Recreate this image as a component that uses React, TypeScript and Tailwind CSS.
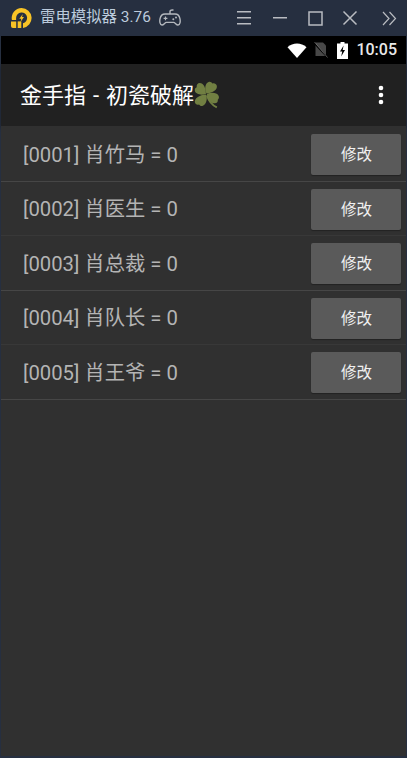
const font = { fontFamily: '"Roboto", "Noto Sans CJK SC", sans-serif' };

const rows = [
  { id: "0001", name: "肖竹马", line: "border-[#464646]" },
  { id: "0002", name: "肖医生", line: "border-[#383838]" },
  { id: "0003", name: "肖总裁", line: "border-[#464646]" },
  { id: "0004", name: "肖队长", line: "border-[#383838]" },
  { id: "0005", name: "肖王爷", line: "border-[#464646]" },
];

function Logo() {
  return (
    <svg width="22" height="21" viewBox="0 0 22 21" className="shrink-0">
      <path
        fillRule="evenodd"
        d="M11.500 0a10 10 0 0 1 1.500 19.900V15.300a5.500 5.500 0 1 0-6.900-5.300v2H1.900A10 10 0 0 1 11.500 0z"
        fill="#f8c326"
      />
      <path d="M1 13.400h5.200V20H3a2 2 0 0 1-2-2z" fill="#f8c326" />
      <rect x="7.700" y="13.400" width="3.600" height="6.600" fill="#f8c326" />
      <path d="M12.800 6 9.300 10.800h2l-.8 3.200 3.500-4.900h-2z" fill="#f8c326" />
    </svg>
  );
}

function Gamepad() {
  return (
    <svg width="22" height="18" viewBox="0 0 22 18" fill="none" stroke="#b4b8bd" strokeWidth="1.400" className="shrink-0">
      <path d="M11 5V2.500C11 1.500 12 1 13 1h1.500" />
      <path d="M6 5h10c2.800 0 4.400 1.800 5 4.800.500 2.800.100 6-2 6.200-1.800.100-2.800-2.600-4.500-2.600h-7C5.800 13.400 4.800 16.100 3 16c-2.100-.2-2.500-3.400-2-6.200C1.600 6.800 3.200 5 6 5z" />
      <path d="M4.600 9.300h3.800M6.500 7.400v3.800" strokeWidth="1.200" />
      <circle cx="14.300" cy="10.200" r="1" fill="#b4b8bd" stroke="none" />
      <circle cx="17" cy="8.400" r="1" fill="#b4b8bd" stroke="none" />
    </svg>
  );
}

function WindowButtons() {
  return (
    <div className="ml-auto flex items-center">
      <svg width="16" height="14" viewBox="0 0 16 14" className="mr-[20px]" fill="#b9bcc1">
        <rect x="1" y="0" width="14" height="1.500" />
        <rect x="1" y="6" width="14" height="1.500" />
        <rect x="1" y="12" width="14" height="1.500" />
      </svg>
      <svg width="16" height="14" viewBox="0 0 16 14" className="mr-[20px]" fill="#b9bcc1">
        <rect x="1" y="6" width="14" height="1.500" />
      </svg>
      <svg width="15" height="15" viewBox="0 0 15 15" className="mr-[19px]" fill="none" stroke="#b9bcc1" strokeWidth="1.500">
        <rect x="1" y="1" width="13" height="13" />
      </svg>
      <svg width="16" height="16" viewBox="0 0 16 16" className="mr-[24px]" fill="none" stroke="#b9bcc1" strokeWidth="1.500">
        <path d="M1.500 1.500 14.500 14.500M14.500 1.500 1.500 14.500" />
      </svg>
      <svg width="15" height="15" viewBox="0 0 15 15" className="mr-[10px]" fill="none" stroke="#b9bcc1" strokeWidth="1.200">
        <path d="M1 1l6 6.500-6 6.500M7.500 1l6 6.500-6 6.500" />
      </svg>
    </div>
  );
}

function StatusIcons() {
  return (
    <>
      <svg width="20" height="15" viewBox="0 0 20 15" className="mr-[6px]">
        <path d="M0.500 4.200C5.800-.8 14.200-.8 19.500 4.200L10 15z" fill="#ffffff" />
      </svg>
      <svg width="15" height="16" viewBox="0 0 15 16" className="mr-[9px]">
        <path d="M2.500 0.500h7.500l3 3v10.500h-10.500z" fill="#484848" />
        <path d="M0.500 0.500 14 15" stroke="#000000" strokeWidth="1.200" />
        <path d="M1.500 0 14.500 15.500" stroke="#8a8a8a" strokeWidth=".6" />
      </svg>
      <svg width="11" height="17" viewBox="0 0 11 17" className="mr-[8px]">
        <path d="M3.500 0h4v1.500h3.500v15.500H0V1.500h3.500z" fill="#ffffff" />
        <path d="M6.600 3.500 3 9.500h2.200L4.200 14.500l3.800-6.500H5.700z" fill="#000000" />
      </svg>
    </>
  );
}

function Clover() {
  return (
    <svg width="27" height="29" viewBox="0 0 26 28" className="shrink-0">
      <g fill="#717f42">
        <path d="M11.500 12.500C7 14 1.500 13 .8 9.500c-.4-2 .6-3 1.800-3.500C2.200 4 3.500 2 5.500 2c3.500 0 6 4.500 6 10.500z" />
        <path d="M12 12C10 8 10.500 2.500 14 1c1.500-.6 3 .2 3.700 1.400C19.200 1.500 21.500 2.500 22 4.500c.8 3.500-3.500 7-10 7.500z" />
        <path d="M12.500 12.500c4-1.700 9.500-1.500 11.200 1.800.8 1.600.2 3-.8 3.800.5 1.600-.8 3.400-2.800 3.400-3.800 0-7.600-3-7.600-9z" />
        <path d="M11.800 13c1.200 4.300.2 9.500-3.300 10.800-1.600.6-3 0-3.700-1.200-1.600.8-3.600 0-4-2-.7-3.500 4-7.300 11-7.600z" />
      </g>
      <path d="M12.500 14c1.500 5 4.500 9 9.500 11.500" fill="none" stroke="#717f42" strokeWidth="1.800" />
    </svg>
  );
}

function Row({ id, name, line }: { id: string; name: string; line: string }) {
  return (
    <div className={`flex h-[54.500px] items-center justify-between border-b ${line} pl-[22px] pr-[5px] pt-[2px]`}>
      <span className="text-[20.300px] text-[#b4b4b4]">
        [{id}] {name} = 0
      </span>
      <button className="flex h-[41px] w-[90px] items-center justify-center rounded-[2px] bg-[#5a5a5a] pl-[1px] pt-[2px] text-[15.500px] text-[#f0f0f0] shadow-[0_1px_1px_rgba(0,0,0,0.3)]">
        修改
      </button>
    </div>
  );
}

export default function App() {
  return (
    <div className="flex h-[758px] w-[407px] flex-col overflow-hidden bg-[#262f40]" style={font}>
      <div className="flex h-[36px] shrink-0 items-center pl-[10px]">
        <Logo />
        <span className="ml-[8px] text-[15.400px] text-[#bccbdc]">雷电模拟器 3.76</span>
        <span className="ml-[8px]">
          <Gamepad />
        </span>
        <WindowButtons />
      </div>
      <div className="flex min-h-0 flex-1 flex-col pb-[2px] pl-px pr-px">
        <div className="flex h-[28px] shrink-0 items-center justify-end bg-black">
          <StatusIcons />
          <span className="mr-[9px] text-[16px] font-medium text-[#e8e8e8]">10:05</span>
        </div>
        <div className="flex h-[62px] shrink-0 items-center bg-[#212121] pl-[19px] pr-[22px] shadow-[0_2px_4px_rgba(0,0,0,0.35)]">
          <span className="text-[22px] text-white [word-spacing:1.500px]">金手指 - 初瓷破解</span>
          <Clover />
          <svg width="6" height="20" viewBox="0 0 6 20" className="ml-auto" fill="#ffffff">
            <circle cx="3" cy="3" r="2.300" />
            <circle cx="3" cy="10" r="2.300" />
            <circle cx="3" cy="17" r="2.300" />
          </svg>
        </div>
        <div className="flex-1 bg-[#303030] pt-[1px]">
          {rows.map((r) => (
            <Row key={r.id} id={r.id} name={r.name} line={r.line} />
          ))}
        </div>
      </div>
    </div>
  );
}
